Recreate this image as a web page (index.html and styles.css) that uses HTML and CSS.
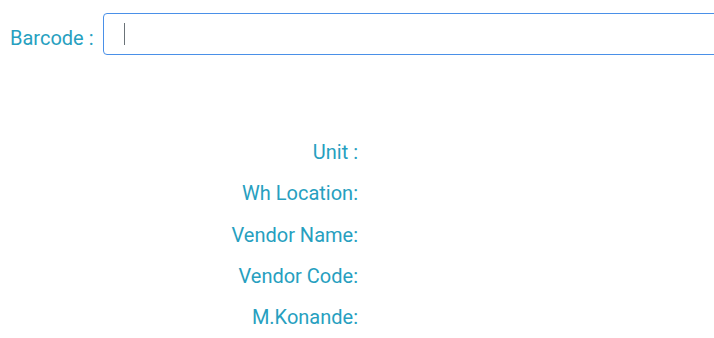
FILE: index.html
```html
<!DOCTYPE html>
<html lang="en">
<head>
    <meta charset="UTF-8">
    <meta name="viewport" content="width=device-width, initial-scale=1.0">
    <title>Barcode Lookup</title>
    <link rel="stylesheet" href="styles.css">
</head>
<body>
    <div class="scan-row">
        <label class="scan-label" for="barcode">Barcode :</label>
        <div class="scan-input" id="barcode">
            <span class="caret"></span>
        </div>
    </div>

    <div class="details">
        <div class="detail-row">
            <span class="detail-label">Unit :</span>
            <span class="detail-value" id="unit"></span>
        </div>
        <div class="detail-row">
            <span class="detail-label">Wh Location:</span>
            <span class="detail-value" id="whLocation"></span>
        </div>
        <div class="detail-row">
            <span class="detail-label">Vendor Name:</span>
            <span class="detail-value" id="vendorName"></span>
        </div>
        <div class="detail-row">
            <span class="detail-label">Vendor Code:</span>
            <span class="detail-value" id="vendorCode"></span>
        </div>
        <div class="detail-row">
            <span class="detail-label">M.Konande:</span>
            <span class="detail-value" id="konande"></span>
        </div>
    </div>
</body>
</html>
```

FILE: styles.css
```css
* {
    margin: 0;
    padding: 0;
    box-sizing: border-box;
}

body {
    font-family: 'Roboto', 'Liberation Sans', sans-serif;
    font-size: 20px;
    color: #279fc0;
    background: #ffffff;
    overflow: hidden;
}

.scan-row {
    display: flex;
    align-items: center;
    padding: 13px 0 0 10px;
}

.scan-label {
    width: 93px;
    flex-shrink: 0;
    padding-top: 8px;
}

.scan-input {
    flex: 1;
    height: 42px;
    margin-right: -20px;
    border: 1px solid #4a90e8;
    border-radius: 4px;
    display: flex;
    align-items: center;
    padding-left: 20px;
}

.caret {
    width: 1px;
    height: 22px;
    background: #6b7378;
}

.details {
    width: 358px;
    margin-top: 77px;
}

.detail-row {
    display: flex;
    justify-content: flex-end;
    line-height: 41.25px;
}

.detail-label {
    text-align: right;
}
```
